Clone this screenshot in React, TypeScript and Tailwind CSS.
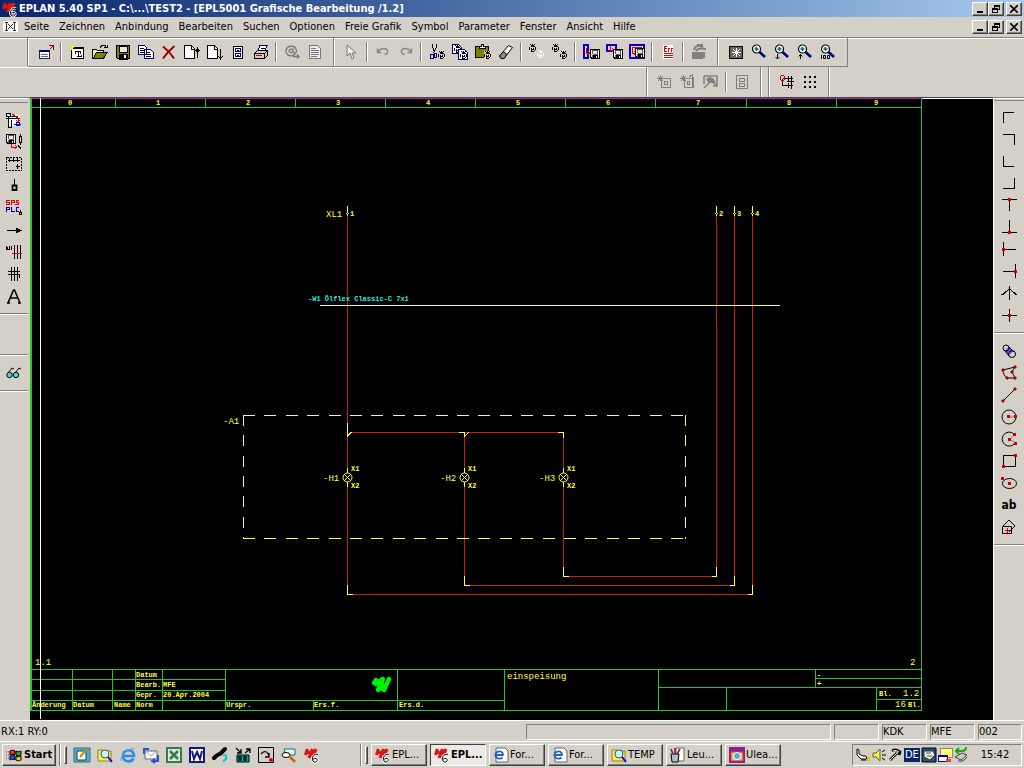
import React, { ReactNode } from 'react';

interface Tool {
  label: string;
  icon: ReactNode;
}

const raised =
  'border border-t-white border-l-white border-r-[#404040] border-b-[#404040] shadow-[inset_-1px_-1px_0_#808080] bg-[#d4d0c8]';
const sunken = 'border border-t-[#808080] border-l-[#808080] border-r-white border-b-white';

function Icon({ children, soft = false }: { children: ReactNode; soft?: boolean }) {
  return (
    <svg
      className="block h-4 w-4 shrink-0 overflow-visible"
      viewBox="0 0 16 16"
      fill="none"
      stroke="#000"
      shapeRendering={soft ? 'auto' : 'crispEdges'}
      aria-hidden="true"
    >
      {children}
    </svg>
  );
}

/* Shared icon parts */

function Floppy({ x = 0, y = 0, s = 16, fill = '#fff' }: { x?: number; y?: number; s?: number; fill?: string }) {
  return (
    <svg x={x} y={y} width={s} height={s} viewBox="0 0 16 16">
      <path d="M1.500 1.500h13v13h-12l-1-1z" fill={fill} strokeWidth={s < 12 ? 1.6 : 1} />
      <path d="M4 2h8v6H4z" fill="#e8e8e0" />
      <path d="M4 10h8v5H4z" fill="#000" />
      <path d="M9 11h2v3H9z" fill="#fff" stroke="none" />
    </svg>
  );
}

function Coil({ x, y, color = '#000' }: { x: number; y: number; color?: string }) {
  return (
    <g transform={`translate(${x} ${y})`} stroke={color}>
      <path d="M1 0.500h1M3 0.500h1M5 0.500h1M2 1.500h3M1.500 2.500h4M0.500 3v3M6.500 3v3M1.500 6.500h1M4.500 6.500h1M2 7.500h3M2.500 3.500v2M4.500 3.500v2M3 5.500h1" />
    </g>
  );
}

function Lens({ children }: { children?: ReactNode }) {
  return (
    <Icon soft>
      <path d="M8.500 8l5.500 5" stroke="#000080" strokeWidth="2.600" />
      <circle cx="5.500" cy="5" r="4" fill="#fff" strokeWidth="1.200" />
      <path d="M5.500 3v4M3.500 5h4" stroke="#066" strokeWidth="1.400" />
      <path d="M4 3l1 1" stroke="#0dd" />
      {children}
    </Icon>
  );
}

function EplanMark() {
  return (
    <Icon soft>
      <path d="M1.500 8l2-6M5 11l3.500-9M9 9l3-7M2 5l5 1" stroke="#d81818" strokeWidth="3.200" />
      <path d="M14 7.500c-3-1-5 1-5.500 3.500s1 4.500 3 4 2.500-3 .5-3.500-3 .5-3.500 1.500" stroke="#fff" strokeWidth="2.600" />
      <path d="M14 7.500c-3-1-5 1-5.500 3.500s1 4.500 3 4 2.500-3 .5-3.500-2 .5-3 1" strokeWidth="1" />
    </Icon>
  );
}

function FolderLens() {
  return (
    <Icon soft>
      <path d="M1 3h5l1 1h7v10H1z" fill="#ffe46b" stroke="#a08000" />
      <circle cx="8" cy="7" r="4" fill="#bff" stroke="#456" />
      <path d="M11 10l4 5" stroke="#00f" strokeWidth="2" />
    </Icon>
  );
}

function IePage() {
  return (
    <Icon soft>
      <path d="M3 1h9l3 3v11H3z" fill="#fff" stroke="#667" />
      <path d="M9.500 10.500c-2 2-7 1.500-7-2.500S8 3.500 9.500 6c.4.700.5 1.300.4 2H3" stroke="#1e62c8" strokeWidth="1.800" />
    </Icon>
  );
}

const fileTools: Tool[] = [
  {
    label: 'Neue Seite',
    icon: (
      <Icon>
        <path d="M1.500 6.500h10v8h-10z" fill="#fff" stroke="#224" />
        <path d="M1 7h11" stroke="#000080" strokeWidth="2" />
        <path d="M3 10.500h7M3 12.500h7" stroke="#668" />
        <path d="M11.500 5.500l3-3M11 1.500h4v4" stroke="#900" />
      </Icon>
    ),
  },
];

const pageTools: Tool[] = [
  {
    label: 'Neues Projekt',
    icon: (
      <Icon>
        <path d="M2.500 3.500h12v11h-12z" fill="#fff" strokeWidth="1" />
        <path d="M3 4.500h11M6 7.500h6M9.500 8v4M8 12.500h4v-2M6.500 7v3M11.500 7v3" />
        <path d="M0 3.500h5M2.500 1v5M1 2l3 3M4 2L1 5" stroke="#ee0" />
      </Icon>
    ),
  },
  {
    label: 'Öffnen',
    icon: (
      <Icon>
        <path d="M0.500 14V5.500h4l1 1h6V9" fill="#ffff80" />
        <path d="M1 14.500L4.500 8.500H15l-3.500 6z" fill="#808000" />
        <path d="M8 3.500l2-2h3l1 2M12 3.500h3V1" />
      </Icon>
    ),
  },
  { label: 'Speichern', icon: <Icon><Floppy fill="#808000" /></Icon> },
  {
    label: 'Kopieren',
    icon: (
      <Icon>
        <path d="M0.500 1.500h6l2 2v7h-8zM6.500 5.500h6l3 3v6h-9z" fill="#fff" stroke="#000080" />
        <path d="M2 4.500h4M2 6.500h4M2 8.500h4M8 8.500h4M8 10.500h5M8 12.500h5" />
      </Icon>
    ),
  },
  {
    label: 'Löschen',
    icon: (
      <Icon soft>
        <path d="M2 2.500c4 3 8 7 11 12M13.500 2C10 5 5 10 2 14.500" stroke="#900" strokeWidth="2" />
      </Icon>
    ),
  },
  {
    label: 'Vorherige Seite',
    icon: (
      <Icon>
        <path d="M0.500 1.500h7l3 3v10h-10z" fill="#fff" />
        <path d="M7.500 2v3h3M13.500 5v9M11.500 7l2-3 2 3" />
        <path d="M12 6h3v2h-3z" fill="#000" stroke="none" />
      </Icon>
    ),
  },
  {
    label: 'Nächste Seite',
    icon: (
      <Icon>
        <path d="M0.500 1.500h7l3 3v10h-10z" fill="#fff" />
        <path d="M7.500 2v3h3M13.500 5v10M11.500 12l2 3 2-3" />
      </Icon>
    ),
  },
  {
    label: 'Seitenliste',
    icon: (
      <Icon>
        <path d="M3.500 2.500h9v12h-9z" fill="#fff" />
        <path d="M5.500 4.500h5v3h-5zM5.500 9.500h5v3h-5z" stroke="#000080" />
        <path d="M7 6h2M7 11h2" />
      </Icon>
    ),
  },
  {
    label: 'Drucken',
    icon: (
      <Icon>
        <path d="M5 7l2-5.500h7L12 7" fill="#fff" stroke="#000080" />
        <path d="M1.500 9.500l3-3h10v5l-3 3h-10z" fill="#d4d0c8" />
        <path d="M1 9.500h10.500V14M12 9l3-3M8 4.500h4" />
        <path d="M3 11.500h6" stroke="#c00" />
      </Icon>
    ),
  },
];

const mailTools: Tool[] = [
  {
    label: 'Senden',
    icon: (
      <Icon soft>
        <path d="M11 10c-3 3-9 2-9-3s8-7 10-2-3 5-3 2V4.500M9 7c0 2-4 2-4 0s4-3 4 0M9 12.500h6M13 10.500l2 2-2 2" stroke="#777" strokeWidth="1.300" />
      </Icon>
    ),
  },
  {
    label: 'Auswertung',
    icon: (
      <Icon>
        <path d="M2.500 1.500h8l3 3v10h-11z" stroke="#777" fill="#eee" />
        <path d="M4 4.500h5M4 6.500h8M4 8.500h8M4 10.500h8M4 12.500h6" stroke="#777" />
      </Icon>
    ),
  },
];

const cursorTools: Tool[] = [
  {
    label: 'Auswahl',
    icon: (
      <Icon soft>
        <path d="M3 1v11l3-3 2 6 2-1-2-5h4z" fill="#eee" stroke="#777" />
      </Icon>
    ),
  },
];

const undoTools: Tool[] = [
  {
    label: 'Rückgängig',
    icon: (
      <Icon soft>
        <path d="M2.500 4.500v4h4M2.500 8.500c3-5 9-5 10-2 .5 2-1 4-3 4" stroke="#888" strokeWidth="1.500" />
      </Icon>
    ),
  },
  {
    label: 'Wiederholen',
    icon: (
      <Icon soft>
        <path d="M13.500 4.500v4h-4M13.500 8.500c-3-5-9-5-10-2-.5 2 1 4 3 4" stroke="#888" strokeWidth="1.500" />
      </Icon>
    ),
  },
];

const editTools: Tool[] = [
  {
    label: 'Ausschneiden',
    icon: (
      <Icon>
        <path d="M3.500 0v3l2 5M7.500 0v3l-3 6" />
        <path d="M1.500 10.500h3v4h-3zM5.500 9.500h2v4h-2z" stroke="#000080" />
        <Coil x={9} y={7} />
      </Icon>
    ),
  },
  {
    label: 'Symbole kopieren',
    icon: (
      <Icon>
        <path d="M0.500 0.500h6l3 3v6h-9z" fill="#fff" stroke="#000080" />
        <Coil x={2} y={1} />
        <path d="M6.500 5.500h6l3 3v7h-9z" fill="#fff" stroke="#000080" />
        <Coil x={8} y={7} />
      </Icon>
    ),
  },
  {
    label: 'Einfügen',
    icon: (
      <Icon>
        <path d="M0.500 2.500h13v11h-13z" fill="#808000" />
        <path d="M4.500 4.500v-2h2v-2h2v2h2v2z" fill="#ff8" />
        <path d="M9 7h7v9H9z" fill="#d4d0c8" stroke="none" />
        <Coil x={9} y={7} />
      </Icon>
    ),
  },
  {
    label: 'Radieren',
    icon: (
      <Icon soft>
        <path d="M1.500 12l9-10.500 4 2L6 14.500H3z" fill="#fff" />
        <path d="M1.500 12l4-4.500 3.500 3-3 4H3z" fill="#888" />
      </Icon>
    ),
  },
];

const coilTools: Tool[] = [
  { label: 'Einzeln', icon: <Icon><Coil x={0} y={0} /><Coil x={8} y={6} color="#fff" /></Icon> },
  { label: 'Mehrfach', icon: <Icon><Coil x={0} y={0} /><Coil x={8} y={7} /></Icon> },
];

const macroTools: Tool[] = [
  {
    label: 'Fenstermakro',
    icon: (
      <Icon>
        <path d="M1 1h4v13H1z" fill="#fcc" stroke="#00c" strokeWidth="2" />
        <path d="M3.500 4v5h4M5 7l2 2-2 2" stroke="#e00" />
        <Floppy x={7} y={5} s={10} />
      </Icon>
    ),
  },
  {
    label: 'Symbolmakro',
    icon: (
      <Icon>
        <path d="M1 1h9v6H1z" fill="#fcc" stroke="#00c" strokeWidth="2" />
        <path d="M4.500 2v4h4M6 4l2 2-2 2" stroke="#e00" />
        <Floppy x={7} y={5} s={10} />
      </Icon>
    ),
  },
  {
    label: 'Seitenmakro',
    icon: (
      <Icon>
        <path d="M1 1h14v13H1z" fill="#fcc" stroke="#00c" strokeWidth="2" />
        <path d="M3.500 4v5h3M5 7l2 2-2 2M3 3.500h10" stroke="#e00" />
        <Floppy x={6} y={4} s={10} />
      </Icon>
    ),
  },
];

const errorTools: Tool[] = [
  {
    label: 'Fehlerliste',
    icon: (
      <Icon>
        <path d="M3 1h10v14H3z" fill="#fff" stroke="none" />
        <path d="M7 2.500H4.500v5H7M5 4.500h2M8.500 8V4.500H10M11.500 8V4.500H13M4 9.500h9M4 11.500h9M4 13.500h9" stroke="#d00" />
      </Icon>
    ),
  },
];

const fireTools: Tool[] = [
  {
    label: 'Ausgabe',
    icon: (
      <Icon soft>
        <path d="M1 8h12l-1 7H1z" fill="#808080" stroke="none" />
        <path d="M3 6c1-5 6-5 9-3M5 7c1-2 4-3 10-2M6 1h6M13 8v6" stroke="#808080" strokeWidth="2" />
      </Icon>
    ),
  },
];

const zoomTools: Tool[] = [
  {
    label: 'Alles zeigen',
    icon: (
      <Icon>
        <path d="M1.500 2.500h13v12h-13z" fill="#666" />
        <path d="M8.500 4v9M4 8.500h9M5 5l7 7M12 5l-7 7" stroke="#fff" />
      </Icon>
    ),
  },
  { label: 'Zoom', icon: <Lens /> },
  { label: 'Verkleinern', icon: <Lens><path d="M3.500 10v5M1.500 13l2 2 2-2" /></Lens> },
  { label: 'Vergrößern', icon: <Lens><path d="M3.500 15v-5M1.500 12.500l2-2 2 2" /></Lens> },
  { label: 'Zoom 100', icon: <Lens><path d="M1.500 11v4M3.500 11.500h2v3h-2zM7.500 11.500h2v3h-2z" /></Lens> },
];

const grayTools: Tool[] = [
  {
    label: 'Symbol neu',
    icon: (
      <Icon>
        <path d="M4.500 4.500h9v9h-9zM7.500 7.500h3v3h-3zM0 4.500h6M3.500 1v6M1 2l5 5M6 2L1 7" stroke="#808080" />
      </Icon>
    ),
  },
  {
    label: 'Symbol ändern',
    icon: (
      <Icon>
        <path d="M4.500 4.500h8v9h-8zM7.500 7.500h2v3h-2zM0 4.500h6M3.500 1v6M1 2l5 5M6 2L1 7M9 3l3-2v3" stroke="#808080" />
        <path d="M13 3v11" stroke="#808080" strokeWidth="2" />
      </Icon>
    ),
  },
  {
    label: 'Makro',
    icon: (
      <Icon soft>
        <path d="M1 2h13v10h-4M1 2v8" stroke="#808080" strokeWidth="1.500" />
        <path d="M1 14l6-6M4 5c3-2 7-1 8 5-3-3-5-2-6-1z" fill="#808080" stroke="#808080" strokeWidth="1.500" />
      </Icon>
    ),
  },
];

const listTools: Tool[] = [
  {
    label: 'Liste',
    icon: (
      <Icon>
        <path d="M2.500 1.500h11v13h-11zM5.500 4.500h5v3h-5zM5.500 9.500h5v3h-5z" stroke="#808080" />
      </Icon>
    ),
  },
];

const gridTools: Tool[] = [
  {
    label: 'Fangen',
    icon: (
      <Icon>
        <path d="M4 4.500h10M3.500 5v6H14M9.500 2v6M12.500 2v13M9.500 9v5M8 7.500h7" />
        <circle cx="3.500" cy="4" r="2.500" stroke="#c00" />
      </Icon>
    ),
  },
  {
    label: 'Raster',
    icon: (
      <Icon>
        <path d="M2 3h12M2 8h12M2 13h12" strokeWidth="2" strokeDasharray="2 3" />
      </Icon>
    ),
  },
];

const symbolTools: Tool[] = [
  {
    label: 'Symbol',
    icon: (
      <Icon>
        <path d="M2 3h12v11H2z" fill="#fff" stroke="none" />
        <path d="M0.500 1.500h4v3h-4zM0 6.500h14M2.500 5v10h3V8M0 4.500h12" />
        <path d="M6 2l6 4v3M10 8l2 2 2-2" stroke="#d00" />
        <path d="M10.500 10.500h3v3h-3zM8 12.500h7" stroke="#00c" />
      </Icon>
    ),
  },
  {
    label: 'Makro einfügen',
    icon: (
      <Icon>
        <Floppy x={0} y={0} s={10} />
        <path d="M14.500 0v2M13.500 2.500h2v6h-2zM14.500 9v2M12 11l3 4" />
        <path d="M5.500 10v3H11M9 11l2 2-2 2" stroke="#d00" />
      </Icon>
    ),
  },
  {
    label: 'Gerätekasten',
    icon: (
      <Icon>
        <path d="M0.500 1.500h15v13h-15z" strokeDasharray="2 1" />
        <path d="M3.500 2v4M7.500 2v4M11.500 2v4M2 4.500h12M11.500 8v5M10 10.500h4" />
      </Icon>
    ),
  },
  {
    label: 'Klemme',
    icon: (
      <Icon soft>
        <path d="M8.500 1v6" />
        <path d="M6.500 7.500h4v4.500h-4z" strokeWidth="1.800" />
      </Icon>
    ),
  },
  {
    label: 'SPS',
    icon: (
      <Icon>
        <path d="M3.500 0.500h-3v2h3v2h-4M5.500 5V.5h3v2h-3M13 .5h-3v2h2v2h-3" stroke="#d00" />
        <path d="M.5 12V7.500h3v2h-3M5.500 7v4.500h3M13 7.500h-3v4h3" stroke="#00c" />
        <path d="M14.500 10v2M13.500 12.500h2v2h-2z" />
      </Icon>
    ),
  },
  {
    label: 'Querverweis',
    icon: (
      <Icon>
        <path d="M1 8.500h9" />
        <path d="M10 6v5l5-2.500z" fill="#000" />
      </Icon>
    ),
  },
  {
    label: 'Kabel',
    icon: (
      <Icon>
        <path d="M.5 2v3h3V2M1.500 3v2M5.500 2v4M8.500 1v14M11.500 1v14M14.500 1v14" />
        <path d="M6 9.500h10" stroke="#d00" />
      </Icon>
    ),
  },
  {
    label: 'Abschirmung',
    icon: (
      <Icon>
        <path d="M5.500 1v14M8.500 1v14M11.500 1v14M2 5.500h12M2 8.500h11l1 3" />
      </Icon>
    ),
  },
  { label: 'Text', icon: <Icon soft><path d="M2 15L7.500 2h1L14 15M4 10h8M1 15h3M12 15h3" strokeWidth="1.600" /></Icon> },
];

const glasses = (
  <Icon soft>
    <path d="M2 8l4-5 2 1M9 8l4-5 2 1" />
    <circle cx="3.500" cy="10" r="2.700" fill="#4dd" />
    <circle cx="10" cy="10" r="2.700" fill="#4dd" />
  </Icon>
);

function Node({ x, y }: { x: number; y: number }) {
  return <rect x={x - 1} y={y - 1} width="3" height="3" fill="#c00" stroke="none" />;
}

const wireTools: Tool[] = [
  { label: 'Winkel rechts unten', icon: <Icon><path d="M13 3.500H2.500V14" /></Icon> },
  { label: 'Winkel links unten', icon: <Icon><path d="M2 3.500h11.500V14" /></Icon> },
  { label: 'Winkel rechts oben', icon: <Icon><path d="M2.500 3v10.500H13" /></Icon> },
  { label: 'Winkel links oben', icon: <Icon><path d="M2 13.500h11.500V3" /></Icon> },
  { label: 'T unten', icon: <Icon><path d="M1 2.500h15M8.500 2v12" /><Node x={8} y={2} /></Icon> },
  { label: 'T oben', icon: <Icon><path d="M1 13.500h15M8.500 1v12" /><Node x={8} y={13} /></Icon> },
  { label: 'T rechts', icon: <Icon><path d="M2.500 1v14M2 8.500h13" /><Node x={2} y={8} /></Icon> },
  { label: 'T links', icon: <Icon><path d="M14.500 1v14M2 8.500h13" /><Node x={14} y={8} /></Icon> },
  { label: 'Sprung', icon: <Icon><path d="M8.500 1v14M0 9.500h2l6.500-6 6.500 6h1" /></Icon> },
  { label: 'Kreuzung', icon: <Icon><path d="M1 8.500h15M8.500 2v13" /><Node x={8} y={8} /></Icon> },
];

const drawTools: Tool[] = [
  {
    label: 'Verbinden',
    icon: (
      <Icon soft>
        <circle cx="5" cy="5" r="3" />
        <circle cx="11" cy="11" r="3.500" />
        <path d="M7 3l6 6M3 7l5 6" />
        <circle cx="8" cy="8" r="2.500" stroke="#00c" />
        <path d="M4 8h8" stroke="#00c" />
      </Icon>
    ),
  },
  {
    label: 'Polygon',
    icon: (
      <Icon soft>
        <path d="M2 5l12-3-3 5 3 6H6C3 11 2 8 2 5z" />
        <g stroke="#a00" fill="#a00"><path d="M1 4h2v2H1zM13 1h2v2h-2zM10 6h2v2h-2zM13 12h2v2h-2zM5 12h2v2H5z" /></g>
      </Icon>
    ),
  },
  { label: 'Linie', icon: <Icon soft><path d="M2 14L14 2" /><path d="M1 13h2v2H1zM13 1h2v2h-2z" stroke="#a00" fill="#a00" /></Icon> },
  { label: 'Kreis', icon: <Icon soft><circle cx="8" cy="8" r="7" /><path d="M8 8h7" stroke="#888" /><Node x={7} y={7} /><Node x={14} y={7} /></Icon> },
  { label: 'Bogen', icon: <Icon soft><path d="M13 3a7 7 0 1 0 1 9" /><path d="M14 3L9 8l5 4" stroke="#888" /><Node x={13} y={3} /><Node x={8} y={8} /><Node x={14} y={12} /></Icon> },
  { label: 'Rechteck', icon: <Icon><path d="M2.500 2.500h12v11h-12z" /><Node x={14} y={2} /><Node x={2} y={13} /></Icon> },
  { label: 'Ellipse', icon: <Icon soft><ellipse cx="8.500" cy="8.500" rx="7" ry="5" /><Node x={1} y={3} /><Node x={8} y={8} /></Icon> },
];

const hatch = (
  <Icon soft>
    <path d="M1.500 7.500h9v7h-9zM2 7l6-6 6 6-6 6" />
    <path d="M4 11.500h5M6.500 9v5" stroke="#d00" />
  </Icon>
);

const quickLaunch: Tool[] = [
  {
    label: 'Desktop',
    icon: (
      <Icon soft>
        <path d="M0 1h16v14H0z" fill="#4ab0d8" stroke="#27708f" />
        <path d="M3 4h9v9H3z" fill="#fff" stroke="#333" />
        <path d="M6 10l7-8" stroke="#c80" strokeWidth="2" />
      </Icon>
    ),
  },
  { label: 'Suche', icon: <FolderLens /> },
  {
    label: 'Internet Explorer',
    icon: (
      <Icon soft>
        <path d="M13.500 11.500C11 16 3 15 3 9s8-8 10.500-2.500c.5 1 .5 1.500.5 2.500H4" stroke="#2c8be0" strokeWidth="2.600" />
        <path d="M1 14C-1 9 9 0 15 2" stroke="#4aa8f0" />
      </Icon>
    ),
  },
  {
    label: 'Outlook Express',
    icon: (
      <Icon soft>
        <path d="M2 4h12v8H2z" fill="#fff" stroke="#667" />
        <path d="M2 4l6 5 6-5" stroke="#aa8" />
        <path d="M1 7V2h5M15 8v6h-5M12 12l-3 2 3 2" stroke="#25c" strokeWidth="2" />
      </Icon>
    ),
  },
  {
    label: 'Excel',
    icon: (
      <Icon soft>
        <path d="M1 1h14v14H1z" fill="#d8ecd8" stroke="#3a7a50" strokeWidth="2" />
        <path d="M4 4l8 8M12 4l-8 8" stroke="#3a7a50" strokeWidth="2.500" />
      </Icon>
    ),
  },
  {
    label: 'Word',
    icon: (
      <Icon soft>
        <path d="M1 1h14v14H1z" fill="#fff" stroke="#101880" strokeWidth="2" />
        <path d="M3 4l2 8 3-7 3 7 2-8" stroke="#101880" strokeWidth="2" />
      </Icon>
    ),
  },
  {
    label: 'Werkzeug',
    icon: (
      <Icon soft>
        <path d="M13 2L9 6M2 11c2-2 4-4 6-4" strokeWidth="4" strokeLinecap="round" />
        <path d="M11 8c5-1 4 5 0 6" stroke="#0cc" strokeWidth="2" />
      </Icon>
    ),
  },
  {
    label: 'Konverter',
    icon: (
      <Icon soft>
        <path d="M2 8h12v7H2z" fill="#0aa" />
        <path d="M1 1l5 5M6 2v4H2M10 6l5-4M15 6V2h-4M4 10h2v3H4zM9 10h2v3H9z" strokeWidth="1.300" />
      </Icon>
    ),
  },
  {
    label: 'Editor',
    icon: (
      <Icon soft>
        <path d="M.5.500h15v15H.5z" fill="#d4d0c8" />
        <path d="M3 7c3-4 7-3 8 3M7 10h4V6" strokeWidth="1.300" />
        <circle cx="13" cy="13" r="2" fill="#e00" stroke="none" />
      </Icon>
    ),
  },
  {
    label: 'Viewer',
    icon: (
      <Icon soft>
        <path d="M3 2h11v6H5z" fill="#cff" stroke="#366" />
        <ellipse cx="5" cy="8" rx="4" ry="2.500" fill="#fff" />
        <path d="M8 9l6 6" stroke="#c60" strokeWidth="2.500" />
      </Icon>
    ),
  },
  { label: 'EPLAN', icon: <EplanMark /> },
];

const menu = [
  'Seite', 'Zeichnen', 'Anbindung', 'Bearbeiten', 'Suchen', 'Optionen',
  'Freie Grafik', 'Symbol', 'Parameter', 'Fenster', 'Ansicht', 'Hilfe',
];

const tasks = [
  { id: 1, text: 'EPL...', icon: <EplanMark /> },
  { id: 2, text: 'EPL...', icon: <EplanMark />, active: true },
  { id: 3, text: 'For...', icon: <IePage /> },
  { id: 4, text: 'For...', icon: <IePage /> },
  { id: 5, text: 'TEMP', icon: <FolderLens /> },
  {
    id: 6,
    text: 'Leu...',
    icon: (
      <Icon soft>
        <path d="M6 1h8v13H6z" fill="#fff" stroke="#666" />
        <path d="M1 7h8l-1 8H2z" fill="#bbb" />
        <path d="M3 7L1 2M5 7V1M7 7l3-5" strokeWidth="1.600" stroke="#724" />
      </Icon>
    ),
  },
  {
    id: 7,
    text: 'Ulea...',
    icon: (
      <Icon soft>
        <path d="M0 0h16v16H0z" fill="#8a2090" stroke="none" />
        <path d="M2 5h12v9H2z" fill="#e8c060" stroke="#d33" />
        <circle cx="8" cy="9" r="3.500" fill="#4ae" stroke="#fff" />
      </Icon>
    ),
  },
];

const tray = [
  <Icon soft><path d="M2 2v6l4 4h6l-1-3H8L4 7V3z" fill="#fff" /><path d="M6 13h5" /><path d="M11 13h3v-3" stroke="#cc0" strokeWidth="2" /></Icon>,
  <Icon soft><path d="M2 6h3l4-4v12l-4-4H2z" fill="#ee6" stroke="#660" /><path d="M11 5l3-2M11 8h4M11 11l3 2" /></Icon>,
  <Icon soft><path d="M3 13l7-7M5 4c3-2 6-1 8 1l-1 3" strokeWidth="2.600" /><path d="M3 13l7-7M6 4c3-1 5 0 6 1" stroke="#fff" /></Icon>,
];

const trayEnd = [
  <Icon soft><path d="M1 1h14v14H1z" fill="#257" /><path d="M3 4h9l2 4-5 5-6-3z" fill="#eee" stroke="#333" /><path d="M5 6h5M6 9h5" stroke="#555" /></Icon>,
  <Icon><path d="M3 1h12v9H3z" fill="#ff6" stroke="#888" /><path d="M1 8h9v6H1z" fill="#fff" stroke="#00c" /><path d="M1 9h9" stroke="#00c" strokeWidth="2" /><path d="M9 12h5v3H9z" fill="#e33" stroke="none" /></Icon>,
  <Icon soft><path d="M2 10l7-4 5 2-6 5z" fill="#ccc" stroke="#444" /><path d="M4 4h5c3 0 4-2 4-4M6 1L3 4l3 3" stroke="#1a1" strokeWidth="2" /><path d="M5 14h5l4-4" stroke="#444" /></Icon>,
];

function ToolButton({ tool }: { tool: Tool }) {
  return (
    <button aria-label={tool.label} className="flex h-[22px] w-[23px] shrink-0 items-center justify-center">
      {tool.icon}
    </button>
  );
}

function ToolBand({ groups }: { groups: Tool[][] }) {
  return (
    <div className="flex items-center border-l border-white pr-2 pl-[5px] shadow-[-1px_0_0_#808080]">
      {groups.map((group, i) => (
        <React.Fragment key={group[0].label}>
          {i > 0 && <div className="mx-[3px] h-5 w-[2px] border-l border-l-[#808080] bg-white" />}
          {group.map(tool => (
            <ToolButton key={tool.label} tool={tool} />
          ))}
        </React.Fragment>
      ))}
    </div>
  );
}

function WindowButtons() {
  const box = `flex h-[14px] w-4 items-center justify-center ${raised}`;
  return (
    <div className="flex pr-[2px]">
      <button aria-label="Minimieren" className={box}>
        <svg className="h-2 w-2" viewBox="0 0 8 8"><path d="M1 6h6v2H1z" /></svg>
      </button>
      <button aria-label="Wiederherstellen" className={`mr-[2px] ${box}`}>
        <svg className="h-2 w-2" viewBox="0 0 8 8" fill="none" stroke="#000" shapeRendering="crispEdges">
          <path d="M2.500 3V.5h5v4H6M2 1.500h6M.5 3.500h5v4h-5zM0 4h6" />
        </svg>
      </button>
      <button aria-label="Schließen" className={box}>
        <svg className="h-2 w-2" viewBox="0 0 8 8" stroke="#000" strokeWidth="1.600"><path d="M0 0l8 8M8 0L0 8" /></svg>
      </button>
    </div>
  );
}

function Lamp({ x, name }: { x: number; name: string }) {
  return (
    <g>
      <g stroke="#ffff40" fill="none">
        <path d={`M${x}.5 468v5M${x}.5 482v5`} />
        <circle cx={x + 0.5} cy="477.500" r="4.500" fill="#000" />
        <path d={`M${x - 3} 474l7 7M${x + 4} 474l-7 7`} />
      </g>
      <text x={x - 24} y="481" fontSize="9" fontWeight="400">{name}</text>
      <text x={x + 4} y="471" fontSize="7">X1</text>
      <text x={x + 4} y="488" fontSize="7">X2</text>
    </g>
  );
}

function Terminal({ x, name }: { x: number; name: string }) {
  return (
    <g>
      <path
        d={`M${x}.5 206v6M${x - 1}.5 213v1M${x + 1}.5 213v1M${x}.5 212v1M${x}.5 214v2`}
        stroke="#ffff40"
        shapeRendering="crispEdges"
      />
      <text x={x + 3} y="216" fontSize="7">{name}</text>
    </g>
  );
}

const columnX = [68, 156, 246, 336, 426, 516, 606, 696, 787, 874];

const blockTexts: [number, number, string][] = [
  [136, 677, 'Datum'],
  [136, 687, 'Bearb.'],
  [163, 687, 'MFE'],
  [136, 697, 'Gepr.'],
  [163, 697, '20.Apr.2004'],
  [32, 707, 'Änderung'],
  [73, 707, 'Datum'],
  [114, 707, 'Name'],
  [136, 707, 'Norm'],
  [226, 707, 'Urspr.'],
  [314, 707, 'Ers.f.'],
  [399, 707, 'Ers.d.'],
  [817, 677, '-'],
  [817, 686, '+'],
  [879, 696, 'Bl.'],
  [908, 707, 'Bl.'],
];

const largeTexts: [number, number, string][] = [
  [326, 217, 'XL1'],
  [223, 424, '-A1'],
  [35, 665, '1.1'],
  [910, 665, '2'],
  [507, 679, 'einspeisung'],
  [903, 696, '1.2'],
  [895, 707, '16'],
];

function Schematic() {
  return (
    <svg
      className="block h-auto w-full font-['Liberation_Mono',monospace] font-bold"
      viewBox="30 97 963 623"
      role="img"
      aria-label="Stromlaufplan"
      fill="#ffff40"
    >
      <rect x="30" y="97" width="963" height="623" fill="#000" />
      <g fill="none" shapeRendering="crispEdges">
        {/* Frame and title block */}
        <path d="M31 97v614" stroke="#29c329" strokeWidth="2" />
        <path
          stroke="#29c329"
          d="M31 107.500h890M921.500 98v613M115.500 99v8M205.500 99v8M295.500 99v8M385.500 99v8M475.500 99v8M565.500 99v8M655.500 99v8M746.500 99v8M836.500 99v8
            M31 669.500h890M31 710.500h891M31 679.500h194M31 690.500h194M31 700.500h473M72.500 669v41M112.500 669v41M135.500 669v41M162.500 669v41M225.500 669v41
            M313.500 700v10M397.500 669v41M504.500 669v41M658.500 669v41M658 687.500h263M815.500 669v18M815 678.500h106M726.500 687v23M876.500 687v23M876 699.500h45"
        />
        <path d="M32 98.500h890" stroke="#b020b0" />
        <path d="M922 98.500h71M40.500 98v621" stroke="#fff" />
        <path d="M30 97.500h963" stroke="#444" />

        {/* Wires */}
        <path
          stroke="#c81c14"
          d="M347.500 216v378h405V216M464.500 432v153h270V216M563.500 432v144h153V216M350 432.500h213"
        />
        <path
          stroke="#ffff40"
          d="M347.500 585v9.500h5M464.500 576v9.500h5M563.500 567v9.500h5M712 576.500h4.500V567M730 585.500h4.500V576M748 594.500h4.500V585
            M347.500 423v13l4-4M459 432.500h5.500v4l4-4M558 432.500h5.500v5M320 305.500h460"
        />
        <path d="M243 415.500h443M243 538.500h443" stroke="#ffff40" strokeDasharray="12 9.400" />
        <path d="M243.500 415v124M685.500 415v124" stroke="#ffff40" strokeDasharray="11 9.300" />
      </g>

      {columnX.map((x, i) => (
        <text key={x} x={x} y="105" fontSize="7">{i}</text>
      ))}

      <Terminal x={347} name="1" />
      <Terminal x={716} name="2" />
      <Terminal x={734} name="3" />
      <Terminal x={752} name="4" />
      <text x="308" y="301" fontSize="7" fill="#30e8d8">-W1 Ölflex Classic-C 7x1</text>

      <Lamp x={347} name="-H1" />
      <Lamp x={464} name="-H2" />
      <Lamp x={563} name="-H3" />

      {blockTexts.map(([x, y, text]) => (
        <text key={`${x}-${y}`} x={x} y={y} fontSize="7">{text}</text>
      ))}
      {largeTexts.map(([x, y, text]) => (
        <text key={`${x}-${y}`} x={x} y={y} fontSize="9" fontWeight="400">{text}</text>
      ))}

      {/* Company mark */}
      <path
        d="M374 683l2-3M378 690l5-11M384 690l5-11M376 684l5-4M382 684v5"
        fill="none"
        stroke="#00f000"
        strokeWidth="4.500"
        strokeLinecap="round"
      />
    </svg>
  );
}

function SideDivider() {
  return <div className="h-[2px] border-t border-t-[#808080] bg-white" />;
}

function SideTool({ tool }: { tool: Tool }) {
  return (
    <button aria-label={tool.label} className="flex h-[22px] w-full items-center justify-center">
      {tool.icon}
    </button>
  );
}

export default function App() {
  return (
    <div className="flex min-h-screen flex-col bg-[#d4d0c8] font-['DejaVu_Sans_Condensed','DejaVu_Sans',sans-serif] text-[11px] leading-[14px] text-black">
      {/* Title bar */}
      <header className="flex h-[17px] items-center justify-between bg-linear-to-r from-[#0a246a] to-[#a6caf0] pl-[2px]">
        <h1 className="flex items-center gap-[1px] font-bold text-white">
          <EplanMark />
          EPLAN 5.40 SP1 - C:\...\TEST2 - [EPL5001 Grafische Bearbeitung /1.2]
        </h1>
        <WindowButtons />
      </header>

      {/* Menu */}
      <nav className="flex h-5 items-center justify-between pl-[3px]">
        <div className="flex items-center">
          <Icon>
            <path d="M0 2h15v11H0z" fill="#fff" stroke="none" />
            <path d="M2 3.500h3M10 3.500h3M3.500 3v9M11.500 3v9M2 11.500h3M10 11.500h3M5 5l5 5M10 5l-5 5" stroke="#333" />
          </Icon>
          {menu.map(item => (
            <button key={item} className="px-[5px]">{item}</button>
          ))}
        </div>
        <WindowButtons />
      </nav>

      {/* Toolbars */}
      <div className="flex h-[30px] border-t border-[#808080] pl-7 shadow-[inset_0_1px_0_#fff]">
        <div className="flex border-b border-[#808080]">
          <ToolBand groups={[fileTools, pageTools, mailTools]} />
          <ToolBand groups={[cursorTools, undoTools, editTools, coilTools, macroTools, errorTools, fireTools]} />
          <ToolBand groups={[zoomTools]} />
          <div className="w-px bg-[#808080]" />
        </div>
      </div>
      <div className="flex h-[30px]">
        <div className="w-[647px] border-t border-white" />
        <ToolBand groups={[grayTools, listTools]} />
        <div className="w-2 border-l border-white shadow-[-1px_0_0_#808080]" />
        <ToolBand groups={[gridTools]} />
        <div className="border-l border-white shadow-[-1px_0_0_#808080]" />
      </div>

      {/* Work area */}
      <main className="flex grow">
        <aside className="w-[30px] shrink-0 border-t border-[#808080] pr-[2px]">
          <div className="mb-[6px] h-[5px] border-y border-t-white border-b-[#808080]" />
          {symbolTools.map(tool => (
            <SideTool key={tool.label} tool={tool} />
          ))}
          <div className="pt-[6px]"><SideDivider /></div>
          <div className="h-[39px]" />
          <SideDivider />
          <div className="py-[6px]">
            <SideTool tool={{ label: 'Vorschau', icon: glasses }} />
          </div>
          <SideDivider />
        </aside>
        <div className="min-w-0 grow bg-black">
          <Schematic />
        </div>
        <aside className="w-[31px] shrink-0 border-t border-l border-t-[#808080] border-l-white">
          <div className="mb-[5px] h-[3px] border-y border-t-white border-b-[#808080]" />
          {wireTools.map(tool => (
            <SideTool key={tool.label} tool={tool} />
          ))}
          <div className="py-[6px]"><SideDivider /></div>
          {drawTools.map(tool => (
            <SideTool key={tool.label} tool={tool} />
          ))}
          <button className="block h-[22px] w-full text-center text-[12px] font-bold">ab</button>
          <SideTool tool={{ label: 'Schraffur', icon: hatch }} />
          <div className="pt-[6px]"><SideDivider /></div>
        </aside>
      </main>

      {/* Status bar */}
      <div className="flex h-[21px] items-center gap-[3px] border-t border-white pt-[2px] pr-[2px]">
        <span className="grow pl-px">RX:1 RY:0</span>
        <span className={`h-4 w-[305px] ${sunken}`} />
        <span className={`h-4 w-[45px] ${sunken}`} />
        <span className={`h-4 w-[45px] ${sunken}`}>KDK</span>
        <span className={`h-4 w-[45px] ${sunken}`}>MFE</span>
        <span className={`h-4 w-[44px] ${sunken}`}>002</span>
      </div>

      {/* Task bar */}
      <footer className="flex h-[27px] items-center border-t border-white px-[2px]">
        <button className={`flex h-[22px] w-[54px] items-center gap-[2px] pl-[3px] font-bold ${raised}`}>
          <Icon soft>
            <path d="M4 4c2-1 4-1 5 0v4c-1-1-3-1-5 0z" fill="#e33" stroke="#000" />
            <path d="M10 4c1 1 3 1 5 0v4c-2 1-4 1-5 0z" fill="#3a3" stroke="#000" />
            <path d="M4 9c2-1 4-1 5 0v4c-1-1-3-1-5 0z" fill="#25d" stroke="#000" />
            <path d="M10 9c1 1 3 1 5 0v4c-2 1-4 1-5 0z" fill="#ec2" stroke="#000" />
            <path d="M0 5h3M0 8h3M0 11h3" stroke="#a22" strokeDasharray="1 1" />
          </Icon>
          Start
        </button>
        <div className="ml-[3px] h-[22px] w-[2px] border-l border-[#808080] bg-white" />
        <div className={`mx-[3px] h-[18px] w-[3px] ${raised}`} />
        <div className="flex">
          {quickLaunch.map(tool => (
            <ToolButton key={tool.label} tool={tool} />
          ))}
        </div>
        <div className="ml-auto" />
        <div className="h-[22px] w-[2px] border-l border-[#808080] bg-white" />
        <div className={`mx-[3px] h-[18px] w-[3px] ${raised}`} />
        <div className="flex gap-[3px]">
          {tasks.map(task => (
            <button
              key={task.id}
              className={`flex h-[22px] w-14 items-center gap-[1px] pl-[3px] ${
                task.active
                  ? 'border border-t-[#404040] border-l-[#404040] border-r-white border-b-white bg-[#ece9e5] font-bold'
                  : raised
              }`}
            >
              {task.icon}
              {task.text}
            </button>
          ))}
        </div>
        <div className={`ml-[71px] flex h-[22px] w-[170px] items-center pl-[2px] ${sunken}`}>
          {tray.map((icon, i) => (
            <span key={i}>{icon}</span>
          ))}
          <span className="mx-px bg-[#0a246a] px-px text-white">DE</span>
          {trayEnd.map((icon, i) => (
            <span key={i}>{icon}</span>
          ))}
          <time className="grow text-center">15:42</time>
        </div>
      </footer>
    </div>
  );
}
